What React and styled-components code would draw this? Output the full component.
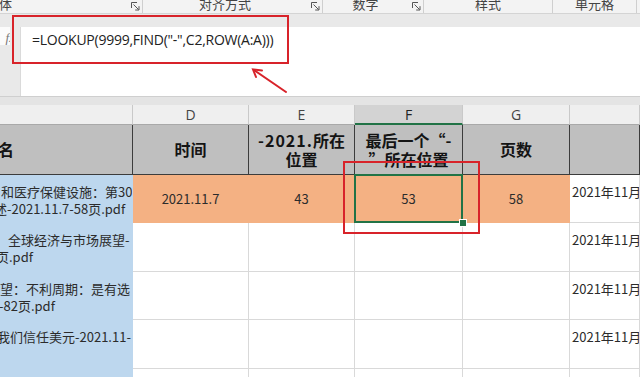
import React from 'react';
import styled, { createGlobalStyle } from 'styled-components';

const Global = createGlobalStyle`
  html, body { margin: 0; padding: 0; }
  body {
    width: 640px; height: 377px; overflow: hidden; background: #e6e6e6;
    font-family: "Noto Sans CJK SC", "Noto Sans", sans-serif;
  }
  #root { width: 640px; height: 377px; }
`;

const Screen = styled.div`
  position: relative;
  width: 640px;
  height: 377px;
  overflow: hidden;
  display: flex;
  flex-direction: column;
  background: #e6e6e6;
`;

/* ---------- ribbon group labels ---------- */
const Ribbon = styled.div`
  display: flex;
  height: 14px;
  flex: none;
  background: #f3f3f3;
  border-bottom: 1px solid #d4d4d4;
  box-sizing: border-box;
  overflow: hidden;
`;

const Group = styled.div`
  display: flex;
  align-items: flex-start;
  width: ${p => p.$w}px;
  flex: none;
  box-sizing: border-box;
  border-right: ${p => (p.$end ? 'none' : '1px solid #cfcfcf')};
  overflow: hidden;
`;

const GroupLabel = styled.span`
  flex: 1;
  text-align: ${p => (p.$left ? 'left' : 'center')};
  margin-left: ${p => p.$shift || 0}px;
  font-size: 13px;
  line-height: 8px;
  color: #444;
  white-space: nowrap;
`;

const Launcher = styled.svg`
  flex: none;
  width: 9px;
  height: 9px;
  margin: 2px 2px 0 4px;
`;

const DialogLauncher = () => (
  <Launcher viewBox="0 0 9 9" fill="none" stroke="#555" strokeWidth="1">
    <path d="M0.5 6V0.5H6" />
    <path d="M2.5 2.5L7.5 7.5M8 4.2V8H4.2" />
  </Launcher>
);

/* ---------- formula bar ---------- */
const FormulaArea = styled.div`
  display: flex;
  flex: none;
  height: 83px;
  padding-top: 13px;
  box-sizing: border-box;
  background: #e9e9e9;
  border-bottom: 1px solid #cfcfcf;
`;

const FxStrip = styled.div`
  width: 20px;
  flex: none;
  display: flex;
  align-items: flex-start;
`;

const FxBox = styled.div`
  width: 10px;
  height: 18px;
  background: #fbfbfb;
  overflow: hidden;
  display: flex;
  align-items: flex-end;
  justify-content: flex-end;
`;

const FxGlyph = styled.span`
  margin-right: -5px;
  font-family: "Liberation Serif", serif;
  font-style: italic;
  font-size: 13px;
  line-height: 15px;
  color: #777;
`;

const FormulaInput = styled.div`
  flex: 1;
  background: #ffffff;
  border-left: 1px solid #dadada;
  padding: 3px 0 0 11px;
  font-family: "Open Sans", "Noto Sans", sans-serif;
  font-size: 14px;
  letter-spacing: -0.25px;
  line-height: 19px;
  color: #222;
  white-space: nowrap;
`;

const Spacer = styled.div`
  height: 8px;
  flex: none;
  background: #e4e4e4;
`;

/* ---------- sheet grid ---------- */
const Sheet = styled.div`
  display: grid;
  grid-template-columns: 133px 116px 106px 108px 107px 70px;
  grid-template-rows: 20px 50px 48px 49px 48px 49px 48px;
  background: #ffffff;
`;

const LetterCell = styled.div`
  position: relative;
  box-sizing: border-box;
  display: flex;
  align-items: center;
  justify-content: center;
  background: ${p => (p.$active ? '#d3d3d3' : '#efefef')};
  border-right: 1px solid #c9c9c9;
  border-bottom: ${p => (p.$active ? '2px solid #217346' : '1px solid #a9a9a9')};
  font-family: "Open Sans", "Noto Sans", sans-serif;
  font-size: 14px;
  color: ${p => (p.$active ? '#222' : '#444')};
`;

const HeadCell = styled.div`
  box-sizing: border-box;
  display: flex;
  align-items: center;
  justify-content: ${p => (p.$left ? 'flex-start' : 'center')};
  text-align: center;
  background: #bfbfbf;
  border-right: 1px solid #3c3c3c;
  border-bottom: 1px solid #3c3c3c;
  font-weight: 700;
  font-size: 16px;
  line-height: 19px;
  color: #141414;
  overflow: hidden;
  white-space: nowrap;
`;

const HeadText = styled.span`
  margin-left: ${p => p.$shift || 0}px;
`;

const Mono = styled.span`
  letter-spacing: 1px;
`;

const fills = {
  orange: '#f4b183',
  blue: '#bdd7ee',
  white: '#ffffff',
};

const DataCell = styled.div`
  position: relative;
  box-sizing: border-box;
  display: flex;
  flex-direction: column;
  align-items: ${p => (p.$top ? 'flex-start' : 'center')};
  justify-content: ${p => (p.$top ? 'flex-start' : 'center')};
  padding: ${p => (p.$top ? '8px 0 0 2px' : '0')};
  background: ${p => fills[p.$fill || 'white']};
  border-right: 1px solid ${p => (p.$fill && p.$fill !== 'white' ? fills[p.$fill] : '#d9d9d9')};
  border-bottom: 1px solid ${p => (p.$fill && p.$fill !== 'white' ? fills[p.$fill] : '#d9d9d9')};
  font-size: 13px;
  line-height: 17px;
  color: #2b2b2b;
  white-space: nowrap;
  overflow: ${p => (p.$selected ? 'visible' : 'hidden')};

  ${p =>
    p.$selected &&
    `
    &::after {
      content: '';
      position: absolute;
      left: -1px; top: -1px; right: -1px; bottom: -1px;
      border: 2px solid #217346;
      pointer-events: none;
    }
  `}
`;

const WrapLine = styled.span`
  display: block;
  margin-left: ${p => p.$shift || 0}px;
  white-space: nowrap;
`;

const FillHandle = styled.span`
  position: absolute;
  right: -5px;
  bottom: -5px;
  width: 6px;
  height: 6px;
  background: #217346;
  border: 1px solid #ffffff;
  z-index: 2;
`;

/* ---------- annotation overlay ---------- */
const Overlay = styled.div`
  position: absolute;
  inset: 0;
  pointer-events: none;
  z-index: 5;
`;

const RedBox = styled.div`
  position: absolute;
  left: ${p => p.$x}px;
  top: ${p => p.$y}px;
  width: ${p => p.$w}px;
  height: ${p => p.$h}px;
  box-sizing: border-box;
  border: 2px solid #d8232a;
`;

const ArrowSvg = styled.svg`
  position: absolute;
  left: 0;
  top: 0;
`;

const letters = ['', 'D', 'E', 'F', 'G', ''];
const heights = [48, 49, 48, 49, 48];

const leftTexts = [
  [['和医疗保健设施：第30', -1], ['述-2021.11.7-58页.pdf', -8]],
  [['，全球经济与市场展望-', -7], ['页.pdf', -6]],
  [['望：不利周期：是有选', -2], ['-82页.pdf', -3]],
  [['我们信任美元-2021.11-', -5]],
  [],
];

export default function App() {
  return (
    <>
      <Global />
      <Screen>
        <Ribbon>
          <Group $w={143}>
            <GroupLabel $left $shift={-14}>字体</GroupLabel>
            <DialogLauncher />
          </Group>
          <Group $w={180}>
            <GroupLabel>对齐方式</GroupLabel>
            <DialogLauncher />
          </Group>
          <Group $w={101}>
            <GroupLabel>数字</GroupLabel>
            <DialogLauncher />
          </Group>
          <Group $w={129}>
            <GroupLabel>样式</GroupLabel>
          </Group>
          <Group $w={84}>
            <GroupLabel>单元格</GroupLabel>
          </Group>
          <Group $w={3} $end />
        </Ribbon>

        <FormulaArea>
          <FxStrip>
            <FxBox><FxGlyph>fx</FxGlyph></FxBox>
          </FxStrip>
          <FormulaInput>=LOOKUP(9999,FIND("-",C2,ROW(A:A)))</FormulaInput>
        </FormulaArea>
        <Spacer />

        <Sheet>
          {letters.map((l, i) => (
            <LetterCell key={'l' + i} $active={l === 'F'}>{l}</LetterCell>
          ))}

          <HeadCell $left><HeadText $shift={-2}>名</HeadText></HeadCell>
          <HeadCell>时间</HeadCell>
          <HeadCell><span><Mono>-2021.</Mono>所在<br />位置</span></HeadCell>
          <HeadCell>最后一个“-<br />”所在位置</HeadCell>
          <HeadCell>页数</HeadCell>
          <HeadCell />

          {heights.map((h, r) => (
            <React.Fragment key={'r' + r}>
              <DataCell $fill="blue" $top>
                {leftTexts[r].map(([t, s], k) => (
                  <WrapLine key={k} $shift={s}>{t}</WrapLine>
                ))}
              </DataCell>
              {r === 0 ? (
                <>
                  <DataCell $fill="orange">2021.11.7</DataCell>
                  <DataCell $fill="orange">43</DataCell>
                  <DataCell $fill="orange" $selected>
                    53
                    <FillHandle />
                  </DataCell>
                  <DataCell $fill="orange">58</DataCell>
                </>
              ) : (
                <>
                  <DataCell />
                  <DataCell />
                  <DataCell />
                  <DataCell />
                </>
              )}
              <DataCell $top>{r < 4 ? '2021年11月' : ''}</DataCell>
            </React.Fragment>
          ))}
        </Sheet>

        <Overlay>
          <RedBox $x={12} $y={15} $w={277} $h={49} />
          <RedBox $x={343} $y={161} $w={137} $h={73} />
          <ArrowSvg width="640" height="377" viewBox="0 0 640 377">
            <g stroke="#d8232a" strokeWidth="2" fill="none" strokeLinecap="round">
              <path d="M286 92L254 70" />
              <path d="M262 70.5L253 69.5L256 77" />
            </g>
          </ArrowSvg>
        </Overlay>
      </Screen>
    </>
  );
}
